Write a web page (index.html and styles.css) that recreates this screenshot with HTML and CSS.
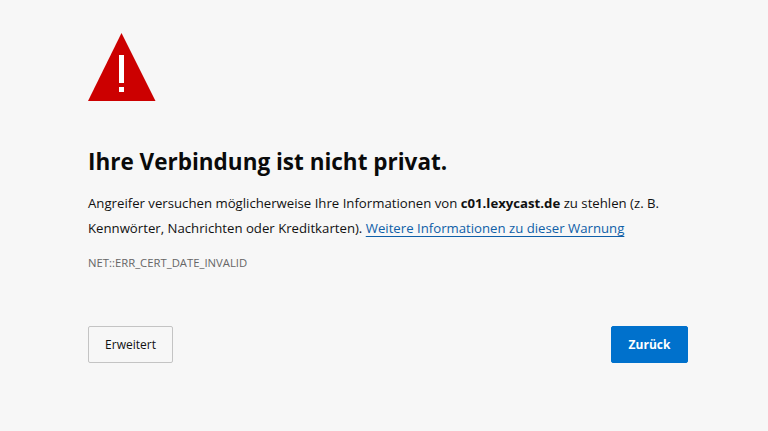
FILE: index.html
```html
<!DOCTYPE html>
<html lang="de">
<head>
<meta charset="utf-8">
<title>Datenschutzfehler</title>
<link rel="stylesheet" href="styles.css">
</head>
<body>
<main class="page">
  <svg class="icon" width="68" height="68" viewBox="0 0 68 68" aria-hidden="true">
    <path class="tri" d="M33.500 0 L67.500 68 L0 68 Z"/>
    <rect class="mark" x="31" y="22" width="5" height="28"/>
    <rect class="mark" x="31" y="54" width="5" height="5"/>
  </svg>
  <h1 class="title">Ihre Verbindung ist nicht privat.</h1>
  <p class="text">Angreifer versuchen möglicherweise Ihre Informationen von <strong>c01.lexycast.de</strong> zu stehlen (z. B. Kennwörter, Nachrichten oder Kreditkarten). <a class="link" href="#">Weitere Informationen zu dieser Warnung</a></p>
  <div class="code">NET::ERR_CERT_DATE_INVALID</div>
  <div class="actions">
    <button class="btn secondary">Erweitert</button>
    <button class="btn primary">Zurück</button>
  </div>
</main>
</body>
</html>
```
FILE: styles.css
```css
html, body { margin: 0; padding: 0; height: 100%; }
body { background: #f7f7f7; font-family: "Open Sans", "Noto Sans", sans-serif; color: #111; overflow: hidden; }
.page { width: 600px; margin-left: 88px; padding-top: 33px; display: flex; flex-direction: column; }
.icon { display: block; }
.tri { fill: #cc0000; }
.mark { fill: #fff; }
.title { margin: 45px 0 0; font-size: 22.500px; line-height: 32px; font-weight: 700; color: #0a0a0a; }
.text { margin: 13px 0 0; font-size: 13.200px; line-height: 25px; }
.text strong { font-weight: 700; }
.link { color: #0f5fa8; text-decoration: underline; text-underline-offset: 3px; }
.code { margin-top: 14px; font-size: 11.300px; line-height: 16px; color: #666; }
.actions { display: flex; justify-content: space-between; margin-top: 55px; }
.btn { font-family: inherit; font-size: 12px; height: 37px; box-sizing: border-box; border-radius: 2px; }
.secondary { width: 85px; background: #f7f7f7; border: 1px solid #c4c4c4; color: #111; }
.primary { width: 77px; background: #0071cc; border: 1px solid #0071cc; color: #fff; font-weight: 700; }
```
